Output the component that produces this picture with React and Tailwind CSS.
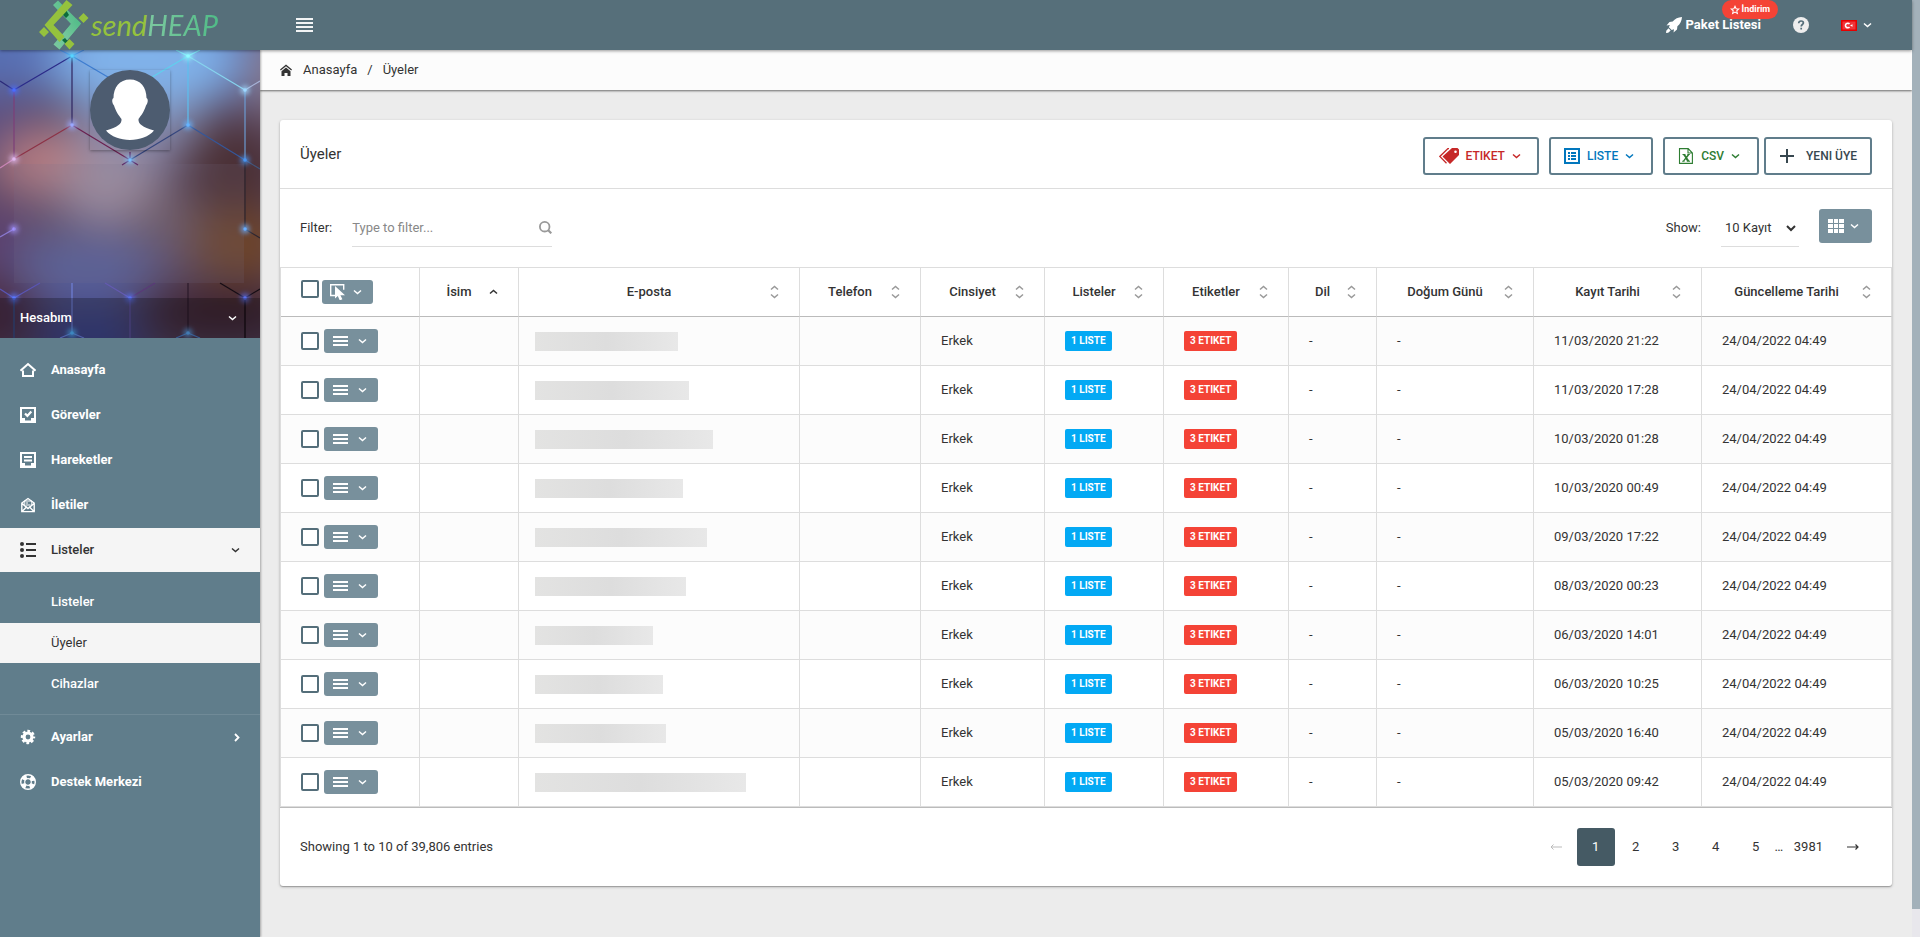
import React from "react";

function Chevron({ dir = "down", className = "" }) {
  const d = {
    down: "M1 1.5l3.5 3 3.5-3",
    up: "M1 4.5l3.5-3 3.5 3",
  }[dir];
  return (
    <svg viewBox="0 0 9 6" className={`h-[6px] w-[9px] shrink-0 ${className}`} fill="none" stroke="currentColor" strokeWidth="1.500" aria-hidden="true">
      <path d={d} />
    </svg>
  );
}

function Icon({ children, className = "size-4" }) {
  return (
    <svg viewBox="0 0 16 16" className={`shrink-0 ${className}`} fill="currentColor" aria-hidden="true">
      {children}
    </svg>
  );
}

const HomeOutline = () => (
  <Icon>
    <path d="M0.5 8.7L8 2l7.500 6.700M3 8.500V14h10V8.500" fill="none" stroke="currentColor" strokeWidth="2" />
  </Icon>
);

const TASK_TRAY = "M0 0h16v16H0zM2 2v9h3v2.500h6V11h3V2z";

const Tasks = () => (
  <Icon>
    <path fillRule="evenodd" d={TASK_TRAY} />
    <path d="M5 6.500l2.400 2.400L11.300 4.500" fill="none" stroke="currentColor" strokeWidth="2.200" />
  </Icon>
);

const Activity = () => (
  <Icon>
    <path fillRule="evenodd" d={TASK_TRAY} />
    <path d="M4 4h8v2H4zM4 7.500h8v2H4z" />
  </Icon>
);

const Mail = () => (
  <Icon>
    <path d="M1.800 6v8.600h12.400V6L8 1.500zM2 14.500l5-5M14 14.500l-5-5M2 6.500l6 5 6-5" fill="none" stroke="currentColor" strokeWidth="1.400" />
    <path d="M4.200 8V4h7.600v4" fill="none" stroke="currentColor" strokeWidth="1" />
    <path d="M5.500 5.500h2.500v1H5.500zM5.500 7.500h5v1h-5z" />
  </Icon>
);

const ListIcon = () => (
  <Icon>
    <circle cx="2" cy="2" r="2" />
    <circle cx="2" cy="8" r="2" />
    <circle cx="2" cy="14" r="2" />
    <path d="M6 1h10v2H6zM6 7h10v2H6zM6 13h10v2H6z" />
  </Icon>
);

const Gear = () => (
  <Icon>
    <g fill="none" stroke="currentColor">
      <circle cx="8" cy="8" r="4" strokeWidth="3.200" />
      <circle cx="8" cy="8" r="6" strokeWidth="2.400" strokeDasharray="2.700 2.012" strokeDashoffset="1.350" />
    </g>
  </Icon>
);

const Lifebuoy = () => (
  <Icon>
    <g fill="none" stroke="currentColor">
      <circle cx="8" cy="8" r="7.300" strokeWidth="1.400" />
      <circle cx="8" cy="8" r="3.300" strokeWidth="1.200" />
      <circle cx="8" cy="8" r="5.300" strokeWidth="4.500" strokeDasharray="4.300 4.025" strokeDashoffset="-2.012" />
    </g>
  </Icon>
);

const Rocket = () => (
  <Icon>
    <path d="M16 0c-4 .3-7 1.800-9.300 4.600L3.500 5 .5 8.500l3.300-.5-.9 2.300 2.800 2.800 2.300-.9L7.500 15.500 11 12.500l.4-3.200C14.200 7 15.700 4 16 0z" />
    <path d="M2.500 11.300L.3 13.800 0 16l2.200-.3 2.500-2.200z" />
  </Icon>
);

function Logo() {
  return (
    <a href="#home" className="flex h-[50px] w-[260px] shrink-0 items-center gap-[2px] pl-[39px]">
      <svg viewBox="0 0 50 50" className="size-[50px] shrink-0" aria-hidden="true">
        <defs>
          <linearGradient id="mint" x1="0" y1="1" x2="1" y2="0">
            <stop offset="0" stopColor="#7cc9a0" />
            <stop offset="1" stopColor="#4dbb86" />
          </linearGradient>
        </defs>
        <path d="M14 5l5-4.500L42 23.500 20.500 49.500l-6-5L32 24z" fill="url(#mint)" />
        <path d="M27 10l3 5-3 3-4-4zM26 38l5 5-3 2-5-5z" fill="#0d6b3c" />
        <path d="M27.500 0l6 5L14.500 25l11 11.500-5 5.500L5.500 25z" fill="#95c23d" />
        <path d="M0 32l5-5 5 5-5 5zM39.500 18l5-5 5 5-5 5zM25.500 44l5-5 5 5-5 5.500z" fill="#95c23d" />
        <path d="M32 24l5-5.500L42 23.500 28 40l-4-6z" fill="url(#mint)" />
      </svg>
      <span className="flex items-baseline font-[Lato,sans-serif] text-[29px] leading-8 italic">
        <span className="text-[#95c23d]">send</span>
        <span className="bg-linear-to-r from-[#7cc9a0] to-[#4dbb86] bg-clip-text pr-1 text-transparent">HEAP</span>
      </span>
    </a>
  );
}

function Navbar() {
  return (
    <header className="relative z-20 flex h-[50px] items-center bg-[#566f7a] text-white shadow-[0_1px_3px_rgba(0,0,0,0.4)]">
      <Logo />
      <button type="button" aria-label="Menü" className="ml-9 p-0">
        <svg viewBox="0 0 17 14" className="h-[14px] w-[17px]" fill="#f2f4f5" aria-hidden="true">
          <path d="M0 0h17v2H0zM0 4h17v2H0zM0 8h17v2H0zM0 12h17v2H0z" />
        </svg>
      </button>
      <nav className="ml-auto flex h-full items-center pr-10">
        <a href="#paket" className="relative flex h-full items-center gap-1 font-bold">
          <Rocket />
          <span>Paket Listesi</span>
          <span className="absolute top-0 left-14 flex h-[19px] items-center gap-[2px] rounded-full bg-[#f44336] px-2 text-[9px] leading-none whitespace-nowrap">
            <svg viewBox="0 0 24 24" className="size-[10px]" fill="none" stroke="currentColor" strokeWidth="2.500" aria-hidden="true">
              <path d="M12 3l2.700 6 6.300.6-4.800 4.300 1.500 6.400L12 17l-5.700 3.300 1.500-6.400L3 9.600 9.300 9z" />
            </svg>
            İndirim
          </span>
        </a>
        <button type="button" aria-label="Yardım" className="ml-8">
          <Icon className="block size-4 text-[#eeeeee]">
            <circle cx="8" cy="8" r="8" />
            <path d="M5.700 6.200c0-1.500 1-2.200 2.300-2.200s2.400.8 2.400 2c0 1.500-2.200 1.600-2.200 3.400M8.200 10.800v1.700" fill="none" stroke="#546e7a" strokeWidth="1.700" />
          </Icon>
        </button>
        <button type="button" aria-label="Dil" className="ml-8 flex items-center gap-[6px]">
          <svg viewBox="0 0 16 11" className="h-[11px] w-4" aria-hidden="true">
            <rect width="16" height="11" fill="#e60000" />
            <rect x="1.500" y="1.500" width="13" height="8" fill="#f0353a" />
            <path d="M8.500 4A2.300 2.300 0 1 0 8.500 7" fill="none" stroke="#fff" strokeWidth="1.500" />
            <path d="M9 5.500l2.500-1.200v2.400z" fill="#fff" />
          </svg>
          <Chevron />
        </button>
      </nav>
    </header>
  );
}

const EDGES = [
  [0, 31, 14, 40, "#2b2a78"], [14, 40, 72, 6, "#2b2a88"], [72, 6, 60, 0, "#4a8de0"], [72, 6, 84, 0, "#4a8de0"],
  [72, 6, 130, 40, "#3d7cd0"], [130, 40, 188, 6, "#5fd0ee"], [188, 6, 176, 0, "#7fe6f8"], [188, 6, 200, 0, "#7fe6f8"],
  [188, 6, 245, 40, "#86d4ee"], [245, 40, 260, 31, "#a8b4d8"], [14, 40, 14, 109, "#7c3f78"], [72, 6, 72, 75, "#2f2560"],
  [188, 6, 188, 75, "#5cc0ee"], [245, 40, 245, 110, "#6c9ad0"], [72, 75, 14, 109, "#8c3246"], [72, 75, 130, 110, "#6b2050"],
  [188, 75, 130, 110, "#35467e"], [188, 75, 245, 110, "#35579a"], [14, 109, 0, 118, "#c884b4"], [245, 110, 260, 119, "#41557c"],
  [245, 110, 245, 179, "#2c2630"], [14, 179, 0, 187, "#8a78d0"], [245, 179, 260, 188, "#2c2630"], [130, 102, 130, 110, "#5c2060"],
  [130, 110, 122, 115, "#5c1a58"], [130, 110, 138, 115, "#5c1a58"], [14, 248, 40, 233, "#5a55b4"], [14, 248, 0, 239, "#5a55b4"],
  [130, 248, 105, 233, "#645ab0"], [130, 248, 155, 233, "#5a3a78"], [245, 248, 220, 233, "#150c14"], [245, 248, 260, 239, "#150c14"],
  [14, 248, 14, 288, "#31508e"], [72, 233, 72, 283, "#7080d8"], [130, 248, 130, 288, "#5f52a0"], [188, 233, 188, 283, "#2a1a2a"],
  [245, 248, 245, 288, "#0e080e"], [72, 283, 60, 288, "#6a80e0"], [72, 283, 84, 288, "#6a80e0"], [188, 283, 176, 288, "#4878c0"],
  [188, 283, 200, 288, "#4878c0"],
];

const NODES = [
  [72, 6, "#55d4ff"], [188, 6, "#8ffcff"], [14, 40, "#4a6cff"], [245, 40, "#9fd8ff"], [72, 75, "#9aa8ff"], [188, 75, "#66b4ff"],
  [14, 109, "#e0b8f0"], [130, 110, "#78c0ff"], [245, 110, "#4a94f0"], [14, 179, "#a090ff"], [245, 179, "#6aaeff"],
  [14, 248, "#5a78ff"], [130, 248, "#5a70ee"], [245, 248, "#5a70ee"], [72, 283, "#50b4ff"], [188, 283, "#5aa4ee"],
];

function CoverArt() {
  return (
    <svg viewBox="0 0 260 288" preserveAspectRatio="xMidYMid slice" className="absolute inset-0 size-full" aria-hidden="true">
      <defs>
        <filter id="soft" x="-50%" y="-50%" width="200%" height="200%" colorInterpolationFilters="sRGB">
          <feGaussianBlur stdDeviation="22" />
        </filter>
        <filter id="glow" x="-100%" y="-100%" width="300%" height="300%" colorInterpolationFilters="sRGB">
          <feGaussianBlur stdDeviation="2.500" />
        </filter>
      </defs>
      <rect width="260" height="288" fill="#5c4560" />
      <g filter="url(#soft)">
        <rect x="-60" y="-60" width="380" height="400" fill="#5c4a66" />
        <rect x="-60" y="-60" width="380" height="105" fill="#5870b4" />
        <ellipse cx="145" cy="10" rx="95" ry="55" fill="#80b2ea" />
        <ellipse cx="280" cy="20" rx="30" ry="50" fill="#8a7684" />
        <ellipse cx="140" cy="85" rx="80" ry="30" fill="#8486a8" />
        <ellipse cx="-10" cy="80" rx="40" ry="40" fill="#5b4c7c" />
        <ellipse cx="42" cy="112" rx="48" ry="34" fill="#b87c80" />
        <ellipse cx="110" cy="138" rx="52" ry="38" fill="#a090a2" />
        <ellipse cx="232" cy="120" rx="50" ry="50" fill="#4a2f34" />
        <ellipse cx="240" cy="195" rx="50" ry="38" fill="#6e4428" />
        <ellipse cx="165" cy="170" rx="35" ry="25" fill="#6f5c66" />
        <ellipse cx="-5" cy="185" rx="30" ry="30" fill="#5c3e70" />
        <ellipse cx="85" cy="218" rx="75" ry="34" fill="#58609a" />
        <ellipse cx="220" cy="262" rx="80" ry="28" fill="#3c2230" />
        <ellipse cx="-5" cy="262" rx="40" ry="36" fill="#4a2840" />
        <ellipse cx="90" cy="290" rx="60" ry="34" fill="#3c4690" />
      </g>
      <g strokeWidth="1.200">
        {EDGES.map(([x1, y1, x2, y2, c], i) => (
          <line key={i} x1={x1} y1={y1} x2={x2} y2={y2} stroke={c} />
        ))}
      </g>
      {NODES.map(([x, y, c], i) => (
        <g key={i} fill={c}>
          <circle cx={x} cy={y} r="4.500" filter="url(#glow)" opacity="0.8" />
          <circle cx={x} cy={y} r="1.800" />
        </g>
      ))}
    </svg>
  );
}

function ProfileCover() {
  return (
    <div className="relative flex h-72 flex-col items-center overflow-hidden pt-5">
      <CoverArt />
      <div className="relative size-20 shrink-0 shadow-[0_1px_3px_rgba(0,0,0,0.35)]">
        <svg viewBox="0 0 80 80" className="size-20" role="img" aria-label="Profil">
          <circle cx="40" cy="40" r="40" fill="#4d5c70" />
          <path d="M40 9.500c-10.500 0-16.500 8-16.500 18.500-2 1-1.500 5 .5 7.500 2 6.500 5 10 7.500 13.500.5 5-4 8-15.500 11.500 5 6 14.500 9.500 24 9.500s19-3.500 24-9.500c-11.500-3.500-16-6.500-15.500-11.500 2.500-3.500 5.500-7 7.500-13.500 2-2.500 2.500-6.500.5-7.500 0-10.500-6-18.500-16.500-18.500z" fill="#fff" />
        </svg>
      </div>
      <div className="relative mt-[14px] h-[119px] self-stretch pr-4 pl-[14px]">
        <div className="size-full bg-[#78708a]/15" />
      </div>
      <button type="button" className="relative mt-auto flex h-10 w-full shrink-0 items-center justify-between bg-black/25 pr-[23px] pl-5 font-medium text-white">
        Hesabım
        <Chevron />
      </button>
    </div>
  );
}

const NAV = [
  ["Anasayfa", HomeOutline],
  ["Görevler", Tasks],
  ["Hareketler", Activity],
  ["İletiler", Mail],
];

function NavItem({ label, children, trailing }) {
  return (
    <a href={`#${label}`} className="flex h-11 items-center gap-[15px] pr-5 pl-5 font-bold">
      {children}
      <span>{label}</span>
      {trailing}
    </a>
  );
}

function Sidebar() {
  return (
    <aside className="relative z-10 flex w-[260px] shrink-0 flex-col bg-[#607d8b] text-white shadow-[1px_0_2px_rgba(0,0,0,0.3)]">
      <ProfileCover />
      <nav className="flex flex-col gap-px pt-[10px]">
        {NAV.map(([label, Glyph]) => (
          <NavItem key={label} label={label}>
            <Glyph />
          </NavItem>
        ))}
        <a href="#listeler" className="flex h-11 items-center gap-[15px] bg-[#f5f5f5] px-5 font-medium text-[#333]">
          <ListIcon />
          <span>Listeler</span>
          <Chevron className="ml-auto" />
        </a>
      </nav>
      <nav className="flex flex-col gap-px border-b border-white/10 py-[10px] font-medium">
        <a href="#listeler-tum" className="flex h-10 items-center pl-[51px]">Listeler</a>
        <a href="#uyeler" className="flex h-10 items-center bg-[#f5f5f5] pl-[51px] font-normal text-[#333]">Üyeler</a>
        <a href="#cihazlar" className="flex h-10 items-center pl-[51px]">Cihazlar</a>
      </nav>
      <nav className="flex flex-col gap-px">
        <NavItem
          label="Ayarlar"
          trailing={
            <svg viewBox="0 0 6 9" className="ml-auto h-[9px] w-[6px]" fill="none" stroke="currentColor" strokeWidth="1.800" aria-hidden="true">
              <path d="M1 1l3.500 3.500L1 8" />
            </svg>
          }
        >
          <Gear />
        </NavItem>
        <NavItem label="Destek Merkezi">
          <Lifebuoy />
        </NavItem>
      </nav>
    </aside>
  );
}

function Breadcrumb() {
  return (
    <nav className="flex h-10 items-center bg-[#fcfcfc] pl-5 text-[#333] shadow-[0_1px_2px_rgba(0,0,0,0.55)]">
      <svg viewBox="0 0 12 12" className="size-3" fill="currentColor" aria-hidden="true">
        <path d="M6 .5l6 5-.8 1L6 2.300.8 6.500 0 5.500zM6 3.500l4.500 3.700V12H7.500V9h-3v3h-3V7.200z" />
      </svg>
      <a href="#home" className="ml-[11px]">Anasayfa</a>
      <span className="mx-[10px]">/</span>
      <span>Üyeler</span>
    </nav>
  );
}

function HeaderButton({ children, className }) {
  return (
    <button type="button" className={`flex h-[38px] items-center rounded-[3px] border-2 border-[#607d8b] bg-white text-xs font-medium ${className}`}>
      {children}
    </button>
  );
}

function CardHeader() {
  return (
    <div className="flex h-[69px] items-center border-b border-[#ddd] px-5 pt-1">
      <h1 className="mb-1 text-[15px]">Üyeler</h1>
      <div className="ml-auto flex">
        <HeaderButton className="mr-[10px] gap-[7px] pr-4 pl-[14px] text-[#c62828]">
          <svg viewBox="0 0 20 16" className="h-4 w-5" fill="currentColor" aria-hidden="true">
            <path fillRule="evenodd" d="M13 0h5.500L20 1.500V7l-9 9-7.500-7.500zM16.500 2.500a1.300 1.300 0 1 0 0 2.600 1.300 1.300 0 0 0 0-2.600z" />
            <path d="M10 .5h-1L.8 8.500 7.500 15.300" fill="none" stroke="currentColor" strokeWidth="1.300" />
          </svg>
          ETIKET
          <Chevron />
        </HeaderButton>
        <HeaderButton className="mr-[10px] gap-[7px] pr-[17px] pl-[13px] text-[#0277bd]">
          <Icon>
            <path fillRule="evenodd" d="M0 0h16v16H0zM2 2v12h12V2z" />
            <path d="M4 4h2v2H4zM7 4h5v2H7zM4 7h2v2H4zM7 7h5v2H7zM4 10h2v2H4zM7 10h5v2H7z" />
          </Icon>
          LISTE
          <Chevron />
        </HeaderButton>
        <HeaderButton className="mr-[5px] gap-[7px] pr-[17px] pl-[13px] text-[#2e7d32]">
          <Icon>
            <path d="M1.500.6h8.700L14.400 5v10.400H1.500zM10 .6V5h4.400" fill="none" stroke="currentColor" strokeWidth="1.100" />
            <path d="M4.500 6h3v1l.9 1.200L9.300 7V6h2.500v1h-.6L9.200 9.700l2.200 3.100h.6v1H8.800v-1l-1-1.600-1.200 1.600v1H4.200v-1h.8l2.200-3L5.200 7h-.7z" />
          </Icon>
          CSV
          <Chevron />
        </HeaderButton>
        <HeaderButton className="gap-3 pr-[13px] pl-[14px] text-[#37474f]">
          <svg viewBox="0 0 14 14" className="size-[14px]" fill="currentColor" aria-hidden="true">
            <path d="M6 0h2v6h6v2H8v6H6V8H0V6h6z" />
          </svg>
          YENI ÜYE
        </HeaderButton>
      </div>
    </div>
  );
}

function Toolbar() {
  return (
    <div className="flex h-[78px] items-start px-5 pt-5">
      <label htmlFor="filter" className="mr-5 leading-[38px]">Filter:</label>
      <div className="flex h-[38px] w-[200px] items-center border-b border-[#ddd]">
        <input id="filter" type="text" placeholder="Type to filter..." className="min-w-0 flex-1 bg-transparent py-1 outline-none placeholder:text-[#888]" />
        <svg viewBox="0 0 13 13" className="size-[13px]" fill="none" stroke="#999" strokeWidth="1.800" aria-hidden="true">
          <circle cx="5.700" cy="5.700" r="4.800" />
          <path d="M9 9l3.300 3.300" strokeWidth="2.200" />
        </svg>
      </div>
      <label htmlFor="show" className="ml-auto leading-[38px]">Show:</label>
      <select id="show" className="mr-5 ml-5 h-[38px] w-[78px] border-b border-[#ddd] bg-transparent outline-none" defaultValue="10">
        <option value="10">10 Kayıt</option>
        <option value="25">25 Kayıt</option>
        <option value="50">50 Kayıt</option>
      </select>
      <button type="button" aria-label="Sütunlar" className="flex h-[34px] w-[53px] items-center gap-[6px] rounded-[3px] bg-[#78909c] pl-[9px] text-white">
        <Icon>
          <path d="M0 1h5v4H0zM6 1h4v4H6zM11 1h5v4h-5zM0 6h5v4H0zM6 6h4v4H6zM11 6h5v4h-5zM0 11h5v4H0zM6 11h4v4H6zM11 11h5v4h-5z" />
        </Icon>
        <Chevron />
      </button>
    </div>
  );
}

const COLUMNS = [
  ["İsim", "w-[99px]"],
  ["E-posta", ""],
  ["Telefon", "w-[121px]"],
  ["Cinsiyet", "w-[124px]"],
  ["Listeler", "w-[119px]"],
  ["Etiketler", "w-[125px]"],
  ["Dil", "w-[88px]"],
  ["Doğum Günü", "w-[157px]"],
  ["Kayıt Tarihi", "w-[168px]"],
  ["Güncelleme Tarihi", "w-[190px]"],
];

const ROWS = [
  ["11/03/2020 21:22", 143],
  ["11/03/2020 17:28", 154],
  ["10/03/2020 01:28", 178],
  ["10/03/2020 00:49", 148],
  ["09/03/2020 17:22", 172],
  ["08/03/2020 00:23", 151],
  ["06/03/2020 14:01", 118],
  ["06/03/2020 10:25", 128],
  ["05/03/2020 16:40", 131],
  ["05/03/2020 09:42", 211],
];

const CHECKBOX = "size-[18px] shrink-0 appearance-none rounded-[2px] border-2 border-[#546e7a] bg-white checked:bg-[#546e7a]";
const TD = "h-[49px] border-r border-b border-[#ddd] px-5";
const BADGE = "flex h-5 w-fit items-center rounded-[2px] px-[6px] text-[10px] leading-none font-bold text-white";

function SortIcon({ active }) {
  return (
    <span className={`mr-5 ml-[10px] flex w-[10px] flex-col items-center gap-[2px] ${active ? "text-[#333]" : "text-[#999]"}`}>
      <Chevron dir="up" />
      {!active && <Chevron />}
    </span>
  );
}

function MembersTable() {
  return (
    <table className="w-full table-fixed border-separate border-spacing-0 border-t border-l border-[#ddd]">
      <thead>
        <tr>
          <th className="h-[49px] w-[139px] border-r border-b border-r-[#ddd] border-b-[#bbb] px-5 py-0">
            <div className="flex h-6 items-start gap-[3px]">
              <input type="checkbox" aria-label="Tümünü seç" className={CHECKBOX} />
              <button type="button" aria-label="Seçim" className="flex h-6 w-[51px] items-center gap-[7px] rounded-[3px] bg-[#78909c] pl-2 text-white">
                <Icon>
                  <path d="M5 11.500H.7V.7h13v5" fill="none" stroke="currentColor" strokeWidth="1.400" />
                  <path d="M5 2v12.500l2.800-2.400L9.800 16.500l2.600-1.200-2-4.100H15z" />
                </Icon>
                <Chevron />
              </button>
            </div>
          </th>
          {COLUMNS.map(([label, width], i) => (
            <th key={label} className={`h-[49px] border-r border-b border-r-[#ddd] border-b-[#bbb] p-0 font-medium ${width}`}>
              <div className="flex items-center pl-5">
                <span className="flex-1 text-center whitespace-nowrap">{label}</span>
                <SortIcon active={i === 0} />
              </div>
            </th>
          ))}
        </tr>
      </thead>
      <tbody>
        {ROWS.map(([date, mask]) => (
          <tr key={date} className="odd:bg-[#fcfcfc]">
            <td className={TD}>
              <div className="flex items-center gap-[5px]">
                <input type="checkbox" aria-label={`Seç ${date}`} className={CHECKBOX} />
                <button type="button" aria-label="İşlemler" className="flex h-6 w-[54px] shrink-0 items-center gap-[10px] rounded-[3px] bg-[#78909c] pl-[9px] text-white">
                  <svg viewBox="0 0 15 10" className="h-[10px] w-[15px]" fill="currentColor" aria-hidden="true">
                    <path d="M0 0h15v2H0zM0 4h15v2H0zM0 8h15v2H0z" />
                  </svg>
                  <Chevron />
                </button>
              </div>
            </td>
            <td className={TD} />
            <td className="h-[49px] border-r border-b border-[#ddd] pl-4">
              <div className="h-[19px] bg-linear-to-r from-[#e3e3e2] via-[#dddddd] to-[#e8e8e8]" style={{ width: mask }} />
            </td>
            <td className={TD} />
            <td className={TD}>Erkek</td>
            <td className={TD}>
              <span className={`${BADGE} bg-[#03a9f4]`}>1 LISTE</span>
            </td>
            <td className={TD}>
              <span className={`${BADGE} bg-[#f44336]`}>3 ETIKET</span>
            </td>
            <td className={TD}>-</td>
            <td className={TD}>-</td>
            <td className={`${TD} whitespace-nowrap`}>{date}</td>
            <td className={`${TD} whitespace-nowrap`}>24/04/2022 04:49</td>
          </tr>
        ))}
      </tbody>
    </table>
  );
}

function TableFooter() {
  return (
    <div className="flex items-center border-t border-[#bbb] px-5 py-5">
      <p>Showing 1 to 10 of 39,806 entries</p>
      <nav className="ml-auto flex items-center gap-[2px]" aria-label="Sayfalar">
        <button type="button" disabled aria-label="Önceki" className="flex size-[38px] items-center justify-center text-[#bbb]">
          <svg viewBox="0 0 12 6" className="h-[6px] w-3" fill="none" stroke="currentColor" aria-hidden="true">
            <path d="M12 3H1M3.500.500L1 3l2.500 2.500" />
          </svg>
        </button>
        <button type="button" aria-current="page" className="size-[38px] rounded-[3px] bg-[#455a64] text-white">1</button>
        {["2", "3", "4", "5"].map((n) => (
          <button key={n} type="button" className="size-[38px]">{n}</button>
        ))}
        <span className="-ml-2 w-5 text-center">…</span>
        <button type="button" className="h-[38px] px-[3px]">3981</button>
        <button type="button" aria-label="Sonraki" className="ml-[6px] flex size-[38px] items-center justify-center">
          <svg viewBox="0 0 12 6" className="h-[6px] w-3" fill="none" stroke="currentColor" strokeWidth="1.200" aria-hidden="true">
            <path d="M0 3h11M8.500.500L11 3 8.500 5.500" />
          </svg>
        </button>
      </nav>
    </div>
  );
}

export default function App() {
  return (
    <div className="flex min-h-screen bg-[#ececec] font-[Roboto,sans-serif] text-[13px] leading-5 text-[#333]">
      <div className="flex min-w-0 flex-1 flex-col">
        <Navbar />
        <div className="flex flex-1">
          <Sidebar />
          <main className="min-w-0 flex-1">
            <Breadcrumb />
            <section className="mx-5 mt-[30px] rounded-[3px] bg-white shadow-[0_1px_3px_rgba(0,0,0,0.25),0_1px_1px_rgba(0,0,0,0.2)]">
              <CardHeader />
              <Toolbar />
              <MembersTable />
              <TableFooter />
            </section>
          </main>
        </div>
      </div>
      <div className="w-2 shrink-0 bg-[#e8e7ec]" aria-hidden="true">
        <div className="h-[97vh] bg-[#a3b1ba]" />
      </div>
    </div>
  );
}
